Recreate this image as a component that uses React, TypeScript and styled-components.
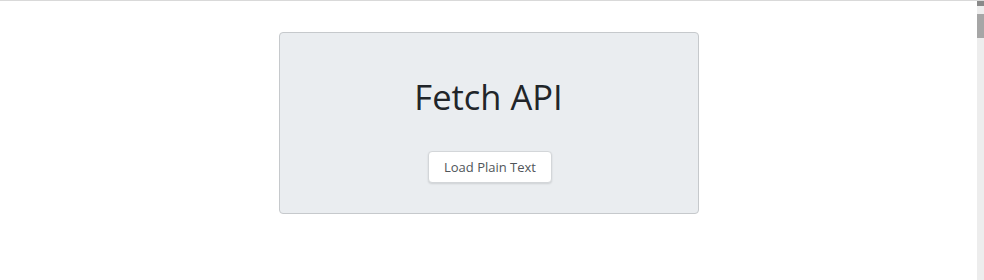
import styled, { createGlobalStyle } from "styled-components";

const GlobalStyle = createGlobalStyle`
    html, body {
        margin: 0;
        padding: 0;
        background: #fff;
    }
    body {
        font-family: "Open Sans", "Noto Sans", sans-serif;
        color: #212529;
    }
`;

const Page = styled.div`
    display: flex;
    width: 984px;
    height: 280px;
    border-top: 1px solid #d9d9d9;
    box-sizing: border-box;
    overflow: hidden;
`;

const Content = styled.main`
    flex: 1;
    display: flex;
    justify-content: center;
    align-items: flex-start;
    padding-top: 31px;
`;

const Card = styled.section`
    width: 420px;
    height: 182px;
    box-sizing: border-box;
    display: flex;
    flex-direction: column;
    align-items: center;
    padding-top: 43px;
    background: #eaedf0;
    border: 1px solid #c6c9cc;
    border-radius: 4px;
`;

const Title = styled.h1`
    margin: 0;
    font-family: "Open Sans", sans-serif;
    font-size: 34.5px;
    font-weight: 400;
    line-height: 42px;
    color: #212529;
`;

const Button = styled.button`
    margin-top: 33px;
    margin-left: 3px;
    height: 32px;
    padding: 0 15px;
    font-family: "Open Sans", sans-serif;
    font-size: 13px;
    color: #50555a;
    background: #fff;
    border: 1px solid #d3d6d9;
    border-radius: 4px;
    box-shadow: 0 1px 2px rgba(0, 0, 0, 0.12);
    cursor: pointer;
`;

const Scrollbar = styled.div`
    width: 7px;
    display: flex;
    flex-direction: column;
    background: #ededed;
`;

const ScrollArrow = styled.div`
    height: 5px;
    background: #8a8a8a;
`;

const ScrollThumb = styled.div`
    margin-top: 8px;
    height: 24px;
    background: #a6a6a6;
`;

export default function App() {
    return (
        <>
            <GlobalStyle />
            <Page>
                <Content>
                    <Card>
                        <Title>Fetch API</Title>
                        <Button type="button">Load Plain Text</Button>
                    </Card>
                </Content>
                <Scrollbar>
                    <ScrollArrow />
                    <ScrollThumb />
                </Scrollbar>
            </Page>
        </>
    );
}
